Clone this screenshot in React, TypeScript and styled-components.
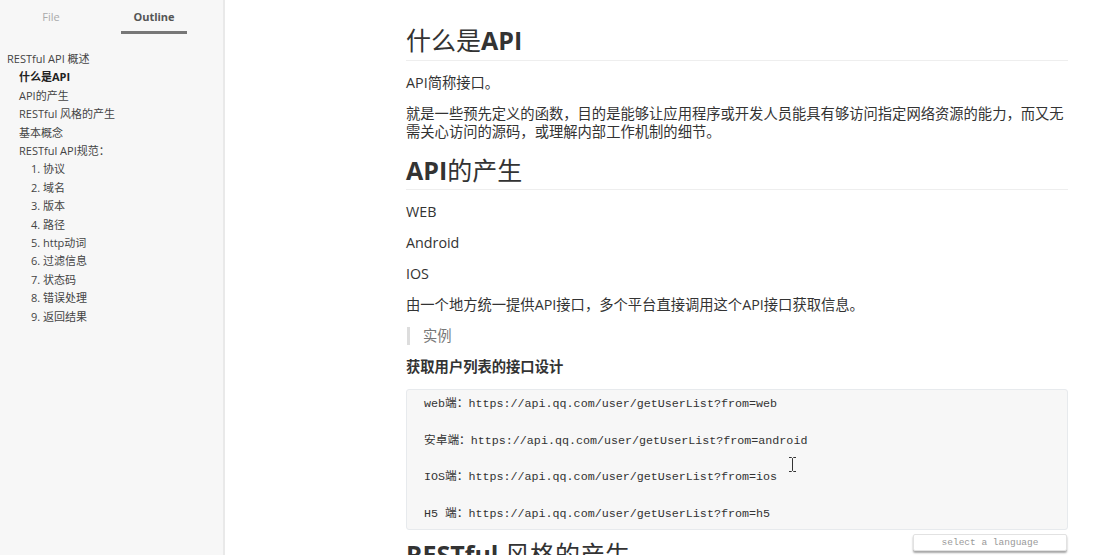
import React from "react";
import styled, { createGlobalStyle } from "styled-components";

const GlobalStyle = createGlobalStyle`
  html, body { margin: 0; padding: 0; background: #fff; }
  body { overflow: hidden; font-family: "Open Sans", "Noto Sans CJK SC", sans-serif; }
  * { box-sizing: border-box; }
`;

const Shell = styled.div`
  display: flex;
  width: 1105px;
  height: 555px;
  overflow: hidden;
`;

const Sidebar = styled.aside`
  flex: 0 0 225px;
  background: #f7f7f7;
  border-right: 2px solid #e9e9e9;
  display: flex;
  flex-direction: column;
`;

const Tabs = styled.div`
  display: flex;
  gap: 37px;
  padding-left: 18px;
`;

const Tab = styled.div<{ $active?: boolean }>`
  width: 66px;
  text-align: center;
  font-size: 11px;
  line-height: 16px;
  padding: 9px 0 6px;
  color: ${(p) => (p.$active ? "#555" : "#aaa")};
  font-weight: ${(p) => (p.$active ? 700 : 400)};
  border-bottom: 3px solid ${(p) => (p.$active ? "#777" : "transparent")};
`;

const OutlineList = styled.div`
  display: flex;
  flex-direction: column;
  padding-top: 16px;
`;

const OutlineItem = styled.div<{ $level: number; $active?: boolean }>`
  font-size: 11px;
  line-height: 18.4px;
  white-space: nowrap;
  color: ${(p) => (p.$active ? "#222" : "#444")};
  font-weight: ${(p) => (p.$active ? 700 : 400)};
  padding-left: ${(p) => 7 + (p.$level - 1) * 12}px;
`;

const Main = styled.main`
  flex: 1;
  padding: 25px 37px 0 181px;
  overflow: hidden;
  color: #333;
`;

const Heading = styled.h2<{ $mt?: number }>`
  margin: ${(p) => p.$mt ?? 14}px 0 0;
  font-size: 25px;
  line-height: 30.6px;
  font-weight: 700;
  padding-bottom: 4px;
  border-bottom: 1px solid #eeeeee;
  color: #333;
  white-space: nowrap;
`;

const Cjk = styled.span`
  font-weight: 400;
`;

const Para = styled.p`
  margin: 13px 0 0;
  font-size: 14.3px;
  line-height: 18px;
`;

const Strong = styled.strong`
  font-weight: 700;
  color: #333;
`;

const Quote = styled.blockquote`
  margin: 13px 0 0 1px;
  padding: 0 13px;
  border-left: 3px solid #dddddd;
  color: #777;
  font-size: 14.3px;
  line-height: 18px;
`;

const CodeWrap = styled.div`
  position: relative;
  margin-top: 13px;
`;

const Pre = styled.pre`
  margin: 0;
  background: #f7f7f7;
  border: 1px solid #e7eaed;
  border-radius: 3px;
  padding: 5px 17px 6px;
  font-family: "Liberation Mono", "Noto Sans CJK SC", monospace;
  font-size: 11.7px;
  line-height: 18.3px;
  color: #333;
  white-space: pre;
`;

const LangSelect = styled.div`
  position: absolute;
  top: calc(100% + 4px);
  right: 1px;
  width: 154px;
  height: 17px;
  background: #fff;
  border: 1px solid #e2e2e2;
  border-radius: 2px;
  box-shadow: 0 2px 2px rgba(0, 0, 0, 0.35);
  font-family: "Liberation Mono", monospace;
  font-size: 9.5px;
  line-height: 15px;
  text-align: center;
  color: #999;
`;

const Cursor = styled.svg`
  position: absolute;
  left: 382px;
  top: 68px;
`;

const outline: { text: string; level: number; active?: boolean }[] = [
  { text: "RESTful API 概述", level: 1 },
  { text: "什么是API", level: 2, active: true },
  { text: "API的产生", level: 2 },
  { text: "RESTful 风格的产生", level: 2 },
  { text: "基本概念", level: 2 },
  { text: "RESTful API规范：", level: 2 },
  { text: "1. 协议", level: 3 },
  { text: "2. 域名", level: 3 },
  { text: "3. 版本", level: 3 },
  { text: "4. 路径", level: 3 },
  { text: "5. http动词", level: 3 },
  { text: "6. 过滤信息", level: 3 },
  { text: "7. 状态码", level: 3 },
  { text: "8. 错误处理", level: 3 },
  { text: "9. 返回结果", level: 3 },
];

const code = [
  "web端：https://api.qq.com/user/getUserList?from=web",
  "",
  "安卓端：https://api.qq.com/user/getUserList?from=android",
  "",
  "IOS端：https://api.qq.com/user/getUserList?from=ios",
  "",
  "H5 端：https://api.qq.com/user/getUserList?from=h5",
].join("\n");

export default function App() {
  return (
    <>
      <GlobalStyle />
      <Shell>
        <Sidebar>
          <Tabs>
            <Tab>File</Tab>
            <Tab $active>Outline</Tab>
          </Tabs>
          <OutlineList>
            {outline.map((o) => (
              <OutlineItem key={o.text} $level={o.level} $active={o.active}>
                {o.text}
              </OutlineItem>
            ))}
          </OutlineList>
        </Sidebar>
        <Main>
          <Heading $mt={0}>
            <Cjk>什么是</Cjk>API
          </Heading>
          <Para>API简称接口。</Para>
          <Para>
            就是一些预先定义的函数，目的是能够让应用程序或开发人员能具有够访问指定网络资源的能力，而又无需关心访问的源码，或理解内部工作机制的细节。
          </Para>
          <Heading>
            API<Cjk>的产生</Cjk>
          </Heading>
          <Para>WEB</Para>
          <Para>Android</Para>
          <Para>IOS</Para>
          <Para>由一个地方统一提供API接口，多个平台直接调用这个API接口获取信息。</Para>
          <Quote>实例</Quote>
          <Para>
            <Strong>获取用户列表的接口设计</Strong>
          </Para>
          <CodeWrap>
            <Pre>{code}</Pre>
            <Cursor width="9" height="15" viewBox="0 0 9 15">
              <path d="M1 0.5h2.5L4.5 1.5L5.5 0.5H8M4.5 1.5V13.5M1 14.5h2.5L4.5 13.5L5.5 14.5H8" fill="none" stroke="#333" strokeWidth="1" />
            </Cursor>
            <LangSelect>select a language</LangSelect>
          </CodeWrap>
          <Heading $mt={9}>
            RESTful <Cjk>风格的产生</Cjk>
          </Heading>
        </Main>
      </Shell>
    </>
  );
}
